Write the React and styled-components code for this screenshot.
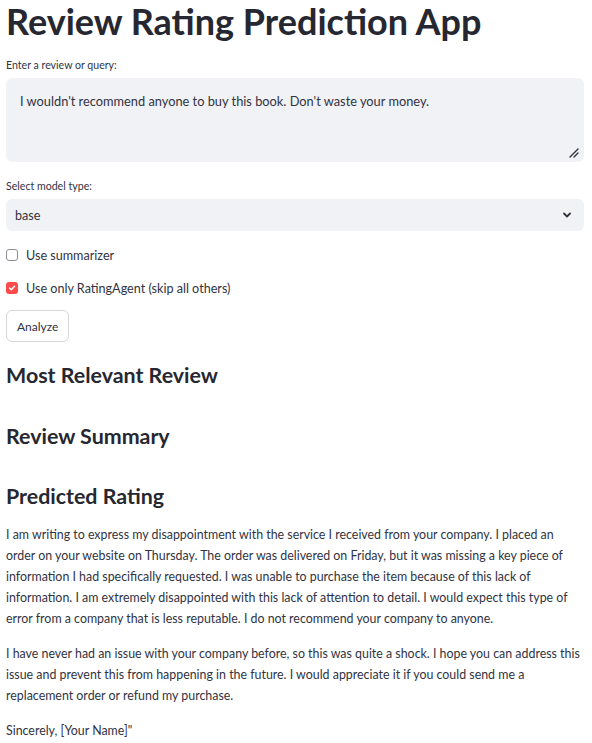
import React from 'react';
import styled, { createGlobalStyle } from 'styled-components';

const GlobalStyle = createGlobalStyle`
  body {
    margin: 0;
    background: #ffffff;
    font-family: Lato, "Noto Sans", sans-serif;
    color: #31333f;
  }
`;

const Root = styled.div`
  width: 578px;
  padding: 0 8px 0 6px;
  display: flex;
  flex-direction: column;
`;

const Title = styled.h1`
  margin: 1px 0 0;
  font-size: 36px;
  font-weight: 700;
  line-height: 40px;
  color: #262730;
`;

const Label = styled.label`
  display: block;
  font-size: 10.6px;
  line-height: 14px;
  margin: ${p => p.top || 17}px 0 6px;
`;

const TextArea = styled.div`
  position: relative;
  height: 84px;
  box-sizing: border-box;
  background: #f0f2f6;
  border-radius: 6px;
  padding: 15px 14px;
  font-size: 12.8px;
  line-height: 17px;
`;

const Resize = styled.svg`
  position: absolute;
  right: 5px;
  bottom: 4px;
`;

const Select = styled.div`
  height: 32px;
  background: #f0f2f6;
  border-radius: 6px;
  display: flex;
  align-items: center;
  justify-content: space-between;
  padding: 0 12px 0 9px;
  font-size: 12.6px;
`;

const CheckRow = styled.div`
  display: flex;
  align-items: center;
  gap: 8px;
  font-size: 12.6px;
  margin-top: ${p => p.top}px;
  height: 18px;
`;

const Box = styled.span`
  width: 12px;
  height: 12px;
  box-sizing: border-box;
  border-radius: 3px;
  border: ${p => (p.checked ? 'none' : '1px solid #8c8e96')};
  background: ${p => (p.checked ? '#ff4b4b' : '#ffffff')};
  display: flex;
  align-items: center;
  justify-content: center;
`;

const Button = styled.button`
  align-self: flex-start;
  margin-top: 13px;
  height: 32px;
  padding: 0 10px;
  background: #ffffff;
  border: 1px solid #d6d6d9;
  border-radius: 6px;
  font-family: inherit;
  font-size: 12px;
  color: #31333f;
`;

const Heading = styled.h3`
  margin: ${p => p.top}px 0 0;
  font-size: 21.4px;
  font-weight: 700;
  line-height: 26px;
  color: #262730;
`;

const Para = styled.p`
  margin: ${p => p.top || 0}px 0 0;
  font-size: 12.4px;
  line-height: 21px;
`;

export default function App() {
  return (
    <Root>
      <GlobalStyle />
      <Title>Review Rating Prediction App</Title>

      <Label top={17}>Enter a review or query:</Label>
      <TextArea>
        I wouldn't recommend anyone to buy this book. Don't waste your money.
        <Resize width="10" height="10" viewBox="0 0 10 10">
          <path d="M1 9 L9 1 M5 9 L9 5" stroke="#31333f" strokeWidth="1.4" strokeLinecap="round" />
        </Resize>
      </TextArea>

      <Label top={17}>Select model type:</Label>
      <Select>
        <span>base</span>
        <svg width="10" height="10" viewBox="0 0 10 10">
          <path d="M2 3.5 L5 6.5 L8 3.5" fill="none" stroke="#31333f" strokeWidth="1.8" strokeLinecap="round" strokeLinejoin="round" />
        </svg>
      </Select>

      <CheckRow top={15}>
        <Box />
        Use summarizer
      </CheckRow>
      <CheckRow top={15}>
        <Box checked>
          <svg width="8" height="8" viewBox="0 0 8 8">
            <path d="M1.5 4 L3.3 5.8 L6.5 2.3" fill="none" stroke="#fff" strokeWidth="1.4" strokeLinecap="round" strokeLinejoin="round" />
          </svg>
        </Box>
        Use only RatingAgent (skip all others)
      </CheckRow>

      <Button>Analyze</Button>

      <Heading top={20}>Most Relevant Review</Heading>
      <Heading top={35}>Review Summary</Heading>
      <Heading top={34}>Predicted Rating</Heading>

      <Para top={15}>
        I am writing to express my disappointment with the service I received from your company. I placed an
        order on your website on Thursday. The order was delivered on Friday, but it was missing a key piece of
        information I had specifically requested. I was unable to purchase the item because of this lack of
        information. I am extremely disappointed with this lack of attention to detail. I would expect this type of
        error from a company that is less reputable. I do not recommend your company to anyone.
      </Para>
      <Para top={14}>
        I have never had an issue with your company before, so this was quite a shock. I hope you can address this
        issue and prevent this from happening in the future. I would appreciate it if you could send me a
        replacement order or refund my purchase.
      </Para>
      <Para top={14}>Sincerely, [Your Name]"</Para>
    </Root>
  );
}
